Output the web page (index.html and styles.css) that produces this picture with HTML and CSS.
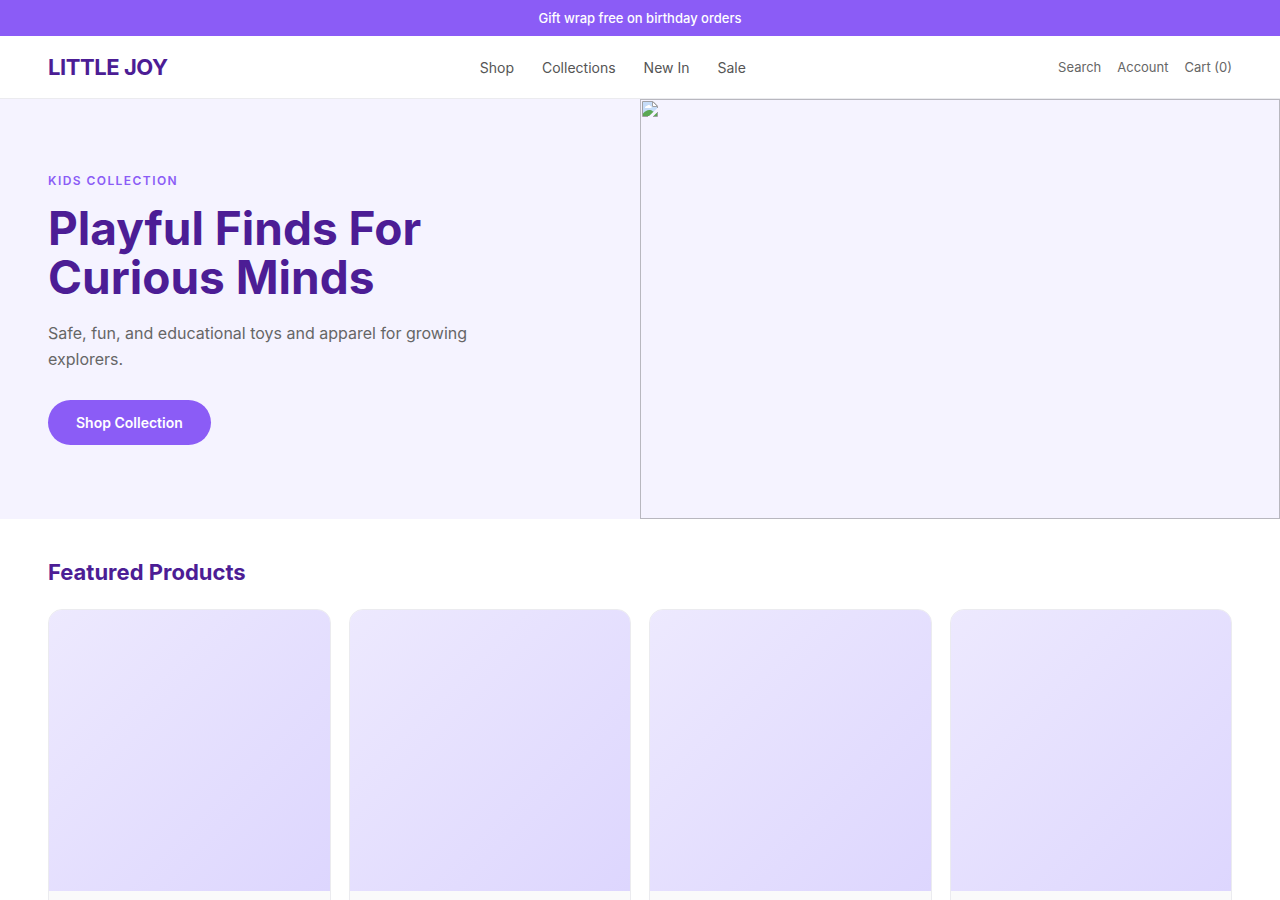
FILE: index.html
```html
<!DOCTYPE html>
<html lang="en">
<head>
  <meta charset="UTF-8">
  <meta name="viewport" content="width=device-width, initial-scale=1.0">
  <title>Little Joy</title>
  <link rel="stylesheet" href="styles.css">
</head>
<body>
  <div class="announcement">Gift wrap free on birthday orders</div>

  <header class="header">
    <a href="#" class="logo">LITTLE JOY</a>
    <nav class="nav">
      <a href="#">Shop</a>
      <a href="#">Collections</a>
      <a href="#">New In</a>
      <a href="#">Sale</a>
    </nav>
    <div class="actions">
      <a href="#">Search</a>
      <a href="#">Account</a>
      <a href="#">Cart (0)</a>
    </div>
  </header>

  <section class="hero">
    <div class="hero-content">
      <p class="eyebrow">KIDS COLLECTION</p>
      <h1>Playful Finds For Curious Minds</h1>
      <p class="hero-text">Safe, fun, and educational toys and apparel for growing explorers.</p>
      <a href="#featured" class="btn">Shop Collection</a>
    </div>
    <div class="hero-image">
      <svg width="16" height="16" viewBox="0 0 16 16" aria-hidden="true">
        <path d="M0.5 0.5H11L15.5 5V15.5H0.5Z" fill="#fff"/>
        <path d="M1 1H10V6H15V15H1Z" fill="#c6dcf8"/>
        <path d="M3 7C3 5.5 4 5 5 5C5.500 3.500 8 3.500 8.500 5C10 5 10 7 9 7Z" fill="#fff"/>
        <path d="M1 15V12.500C4 9 8 8 11 10.500L15 12V15Z" fill="#5aa853"/>
        <path d="M6 16L16 6.500V10.500L10.500 16Z" fill="#f5f3ff"/>
        <path d="M6 15.500H0.500V0.500H11L15.500 5V7M15.500 11V15.500H11" fill="none" stroke="#a0a0a4"/>
        <path d="M10.500 0.500V5.500H15.500Z" fill="#fff" stroke="#a0a0a4"/>
      </svg>
    </div>
  </section>

  <section class="featured" id="featured">
    <h2>Featured Products</h2>
    <div class="products">
      <article class="card">
        <div class="card-image"></div>
        <div class="card-body"></div>
      </article>
      <article class="card">
        <div class="card-image"></div>
        <div class="card-body"></div>
      </article>
      <article class="card">
        <div class="card-image"></div>
        <div class="card-body"></div>
      </article>
      <article class="card">
        <div class="card-image"></div>
        <div class="card-body"></div>
      </article>
    </div>
  </section>
</body>
</html>
```
FILE: styles.css
```css
* {
  box-sizing: border-box;
  margin: 0;
  padding: 0;
}
body {
  font-family: Inter, sans-serif;
  background: #fff;
  color: #4c1d95;
}
a {
  color: inherit;
  text-decoration: none;
}
.announcement {
  background: #8b5cf6;
  color: #fff;
  text-align: center;
  font-size: 13px;
  font-weight: 500;
  line-height: 16px;
  padding: 10px 20px;
}
.header {
  display: flex;
  justify-content: space-between;
  align-items: center;
  padding: 18px 48px;
  border-bottom: 1px solid #ebebef;
}
.logo {
  font-size: 22px;
  font-weight: 700;
  line-height: 26px;
  letter-spacing: -0.02em;
}
.nav {
  display: flex;
  gap: 28px;
  font-size: 14px;
  color: #555;
}
.actions {
  display: flex;
  gap: 16px;
  font-size: 13px;
  color: #666;
}
.hero {
  display: grid;
  grid-template-columns: 1fr 1fr;
  min-height: 420px;
  background: #f5f3ff;
}
.hero-content {
  display: flex;
  flex-direction: column;
  justify-content: center;
  align-items: flex-start;
  padding: 48px;
}
.eyebrow {
  font-size: 12px;
  font-weight: 600;
  line-height: 15px;
  letter-spacing: 0.12em;
  color: #8b5cf6;
  margin-bottom: 16px;
}
h1 {
  font-size: 46px;
  font-weight: 700;
  line-height: 49px;
  max-width: 440px;
  margin-bottom: 18px;
}
.hero-text {
  font-size: 16px;
  line-height: 26px;
  color: #666;
  max-width: 440px;
  margin-bottom: 28px;
}
.btn {
  background: #8b5cf6;
  color: #fff;
  font-size: 14px;
  font-weight: 600;
  line-height: 17px;
  padding: 14px 28px;
  border-radius: 999px;
}
.hero-image {
  border: 1px solid #b8b7bf;
  padding: 1px;
}
.hero-image svg {
  display: block;
}
.featured {
  padding: 40px 48px;
}
h2 {
  font-size: 22px;
  font-weight: 700;
  line-height: 27px;
  margin-bottom: 23px;
}
.products {
  display: grid;
  grid-template-columns: repeat(4, 1fr);
  gap: 18px;
}
.card {
  background: #fafafa;
  border: 1px solid #ebebef;
  border-radius: 14px;
  overflow: hidden;
}
.card-image {
  aspect-ratio: 1;
  background: linear-gradient(135deg, #ede9fe, #ddd6fe);
}
.card-body {
  padding: 32px 16px;
}
```
